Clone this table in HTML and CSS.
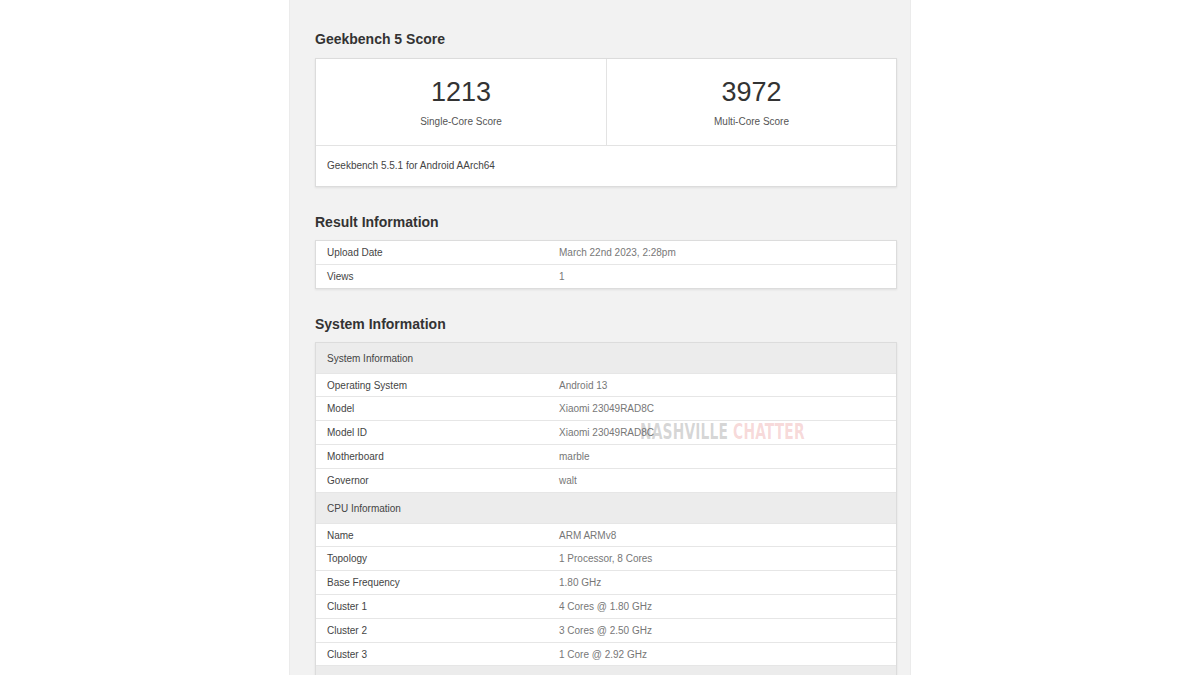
FILE: index.html
```html
<!DOCTYPE html>
<html>
<head>
<meta charset="utf-8">
<link rel="stylesheet" href="styles.css">
</head>
<body>
<div class="page">
  <main class="panel">
    <h2 class="heading first">Geekbench 5 Score</h2>
    <section class="card">
      <div class="scores">
        <div class="score">
          <div class="num">1213</div>
          <div class="lbl">Single-Core Score</div>
        </div>
        <div class="score">
          <div class="num">3972</div>
          <div class="lbl">Multi-Core Score</div>
        </div>
      </div>
      <div class="card-foot">Geekbench 5.5.1 for Android AArch64</div>
    </section>

    <h2 class="heading">Result Information</h2>
    <section class="card table">
      <div class="row"><span class="k">Upload Date</span><span class="v">March 22nd 2023, 2:28pm</span></div>
      <div class="row"><span class="k">Views</span><span class="v">1</span></div>
    </section>

    <h2 class="heading">System Information</h2>
    <section class="card table sys">
      <div class="row head"><span class="k">System Information</span></div>
      <div class="row"><span class="k">Operating System</span><span class="v">Android 13</span></div>
      <div class="row"><span class="k">Model</span><span class="v">Xiaomi 23049RAD8C</span></div>
      <div class="row"><span class="k">Model ID</span><span class="v">Xiaomi 23049RAD8C</span></div>
      <div class="row"><span class="k">Motherboard</span><span class="v">marble</span></div>
      <div class="row"><span class="k">Governor</span><span class="v">walt</span></div>
      <div class="row head"><span class="k">CPU Information</span></div>
      <div class="row"><span class="k">Name</span><span class="v">ARM ARMv8</span></div>
      <div class="row"><span class="k">Topology</span><span class="v">1 Processor, 8 Cores</span></div>
      <div class="row"><span class="k">Base Frequency</span><span class="v">1.80 GHz</span></div>
      <div class="row"><span class="k">Cluster 1</span><span class="v">4 Cores @ 1.80 GHz</span></div>
      <div class="row"><span class="k">Cluster 2</span><span class="v">3 Cores @ 2.50 GHz</span></div>
      <div class="row"><span class="k">Cluster 3</span><span class="v">1 Core @ 2.92 GHz</span></div>
      <div class="row head"><span class="k"></span></div>
      <div class="watermark"><span class="wm-a">NASHVILLE</span> <span class="wm-b">CHATTER</span></div>
    </section>
  </main>
</div>
</body>
</html>
```

FILE: styles.css
```css
html, body {
  margin: 0;
  padding: 0;
  background: #ffffff;
  height: 675px;
  overflow: hidden;
}

body {
  font-family: "Liberation Sans", Arial, sans-serif;
  color: #444;
}

.page {
  display: flex;
  justify-content: center;
}

.panel {
  width: 622px;
  box-sizing: border-box;
  background: #f2f2f2;
  border-left: 1px solid #ebebeb;
  border-right: 1px solid #ebebeb;
  padding: 4px 13px 0 25px;
  min-height: 700px;
}

.heading {
  font-size: 14px;
  font-weight: bold;
  line-height: 20px;
  color: #333;
  margin: 25px 0 8px;
}

.heading.first {
  margin-bottom: 9px;
}

.card {
  background: #fff;
  border: 1px solid #dcdcdc;
  box-shadow: 0 1px 2px rgba(0, 0, 0, 0.08);
  position: relative;
}

.scores {
  display: grid;
  grid-template-columns: 1fr 1fr;
  height: 86px;
}

.score {
  text-align: center;
  padding-top: 17px;
  box-sizing: border-box;
}

.score + .score {
  border-left: 1px solid #e3e3e3;
}

.num {
  font-size: 27px;
  line-height: 32px;
  color: #333;
}

.lbl {
  font-size: 10px;
  line-height: 12px;
  margin-top: 8px;
  color: #555;
}

.card-foot {
  border-top: 1px solid #e3e3e3;
  height: 40px;
  line-height: 40px;
  padding: 0 11px;
  font-size: 10px;
  color: #444;
}

.table .row {
  display: grid;
  grid-template-columns: 232px 1fr;
  box-sizing: border-box;
  height: 23.8px;
  padding-top: 1px;
  line-height: 21.8px;
  font-size: 10px;
  border-top: 1px solid #e6e6e6;
}

.table .row:first-child {
  border-top: 0;
  height: 22.8px;
}

.table .row.head {
  background: #ececec;
  height: 31px;
  line-height: 29px;
}

.table .row.head:first-child {
  height: 30px;
}

.table .k {
  padding-left: 11px;
  color: #444;
}

.table .v {
  padding-left: 11px;
  color: #777;
}

.watermark {
  position: absolute;
  left: 324px;
  top: 78px;
  font-family: "DejaVu Sans Condensed", "DejaVu Sans", sans-serif;
  font-weight: bold;
  font-size: 22px;
  line-height: 22px;
  letter-spacing: 0.2px;
  transform: scaleX(0.7);
  transform-origin: left center;
  white-space: nowrap;
  pointer-events: none;
}

.wm-a {
  color: rgba(110, 110, 110, 0.28);
}

.wm-b {
  color: rgba(225, 110, 110, 0.26);
}
```
